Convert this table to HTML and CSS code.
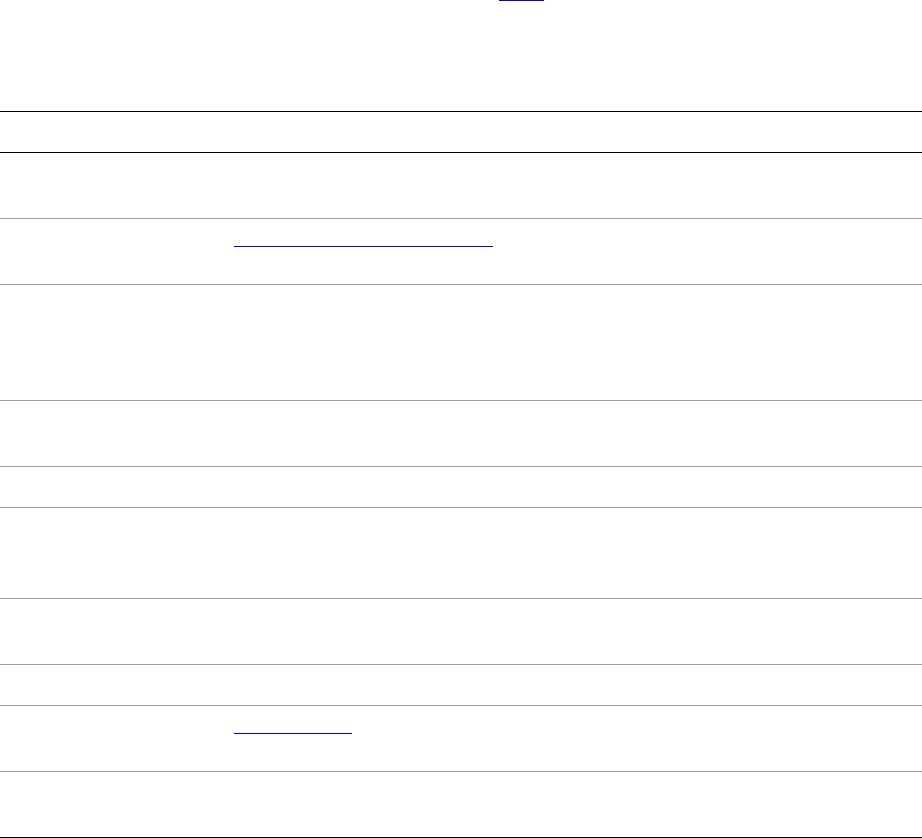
FILE: index.html
```html
<!DOCTYPE html>
<html lang="en">
<head>
<meta charset="utf-8">
<title>Table</title>
<link rel="stylesheet" href="styles.css">
</head>
<body>
<div class="intro">
  <a class="ulink ulink-top" href="#"></a>
</div>
<div class="table">
  <div class="row head"></div>
  <div class="row l2"></div>
  <div class="row l2"><div class="c1"></div><div class="c2"><a class="ulink ulink-long" href="#"></a></div></div>
  <div class="row l4"></div>
  <div class="row l2"></div>
  <div class="row l1"></div>
  <div class="row l3"></div>
  <div class="row l2"></div>
  <div class="row l1"></div>
  <div class="row l2"><div class="c1"></div><div class="c2"><a class="ulink ulink-short visited" href="#"></a></div></div>
  <div class="row l2 last"></div>
</div>
</body>
</html>
```
FILE: styles.css
```css
html, body {
  margin: 0;
  padding: 0;
  background: #ffffff;
  font-family: "Liberation Sans", Arial, sans-serif;
  font-size: 16px;
  color: #000;
}

.intro {
  height: 111px;
  padding-left: 499px;
  box-sizing: border-box;
}

.ulink {
  display: block;
}

.ulink-top {
  width: 45px;
  border-top: 1px solid #0000ff;
}

.table {
  display: flex;
  flex-direction: column;
}

.row {
  display: grid;
  grid-template-columns: 234px 1fr;
  border-bottom: 1px solid #9e9e9e;
  box-sizing: content-box;
}

.row.head {
  border-top: 1px solid #000;
  border-bottom: 1px solid #000;
  height: 40px;
}

.row.last {
  border-bottom: 1px solid #000;
}

.l1 { height: 40px; }
.l2 { height: 65px; }
.l3 { height: 90px; }
.l4 { height: 115px; }

.c2 {
  padding-top: 8px;
}

.ulink-long,
.ulink-short {
  height: 19px;
  border-bottom: 1px solid #0000ff;
}

.ulink-long { width: 259px; }
.ulink-short { width: 118px; }
.ulink.visited { border-bottom-color: #0000cc; }
```
